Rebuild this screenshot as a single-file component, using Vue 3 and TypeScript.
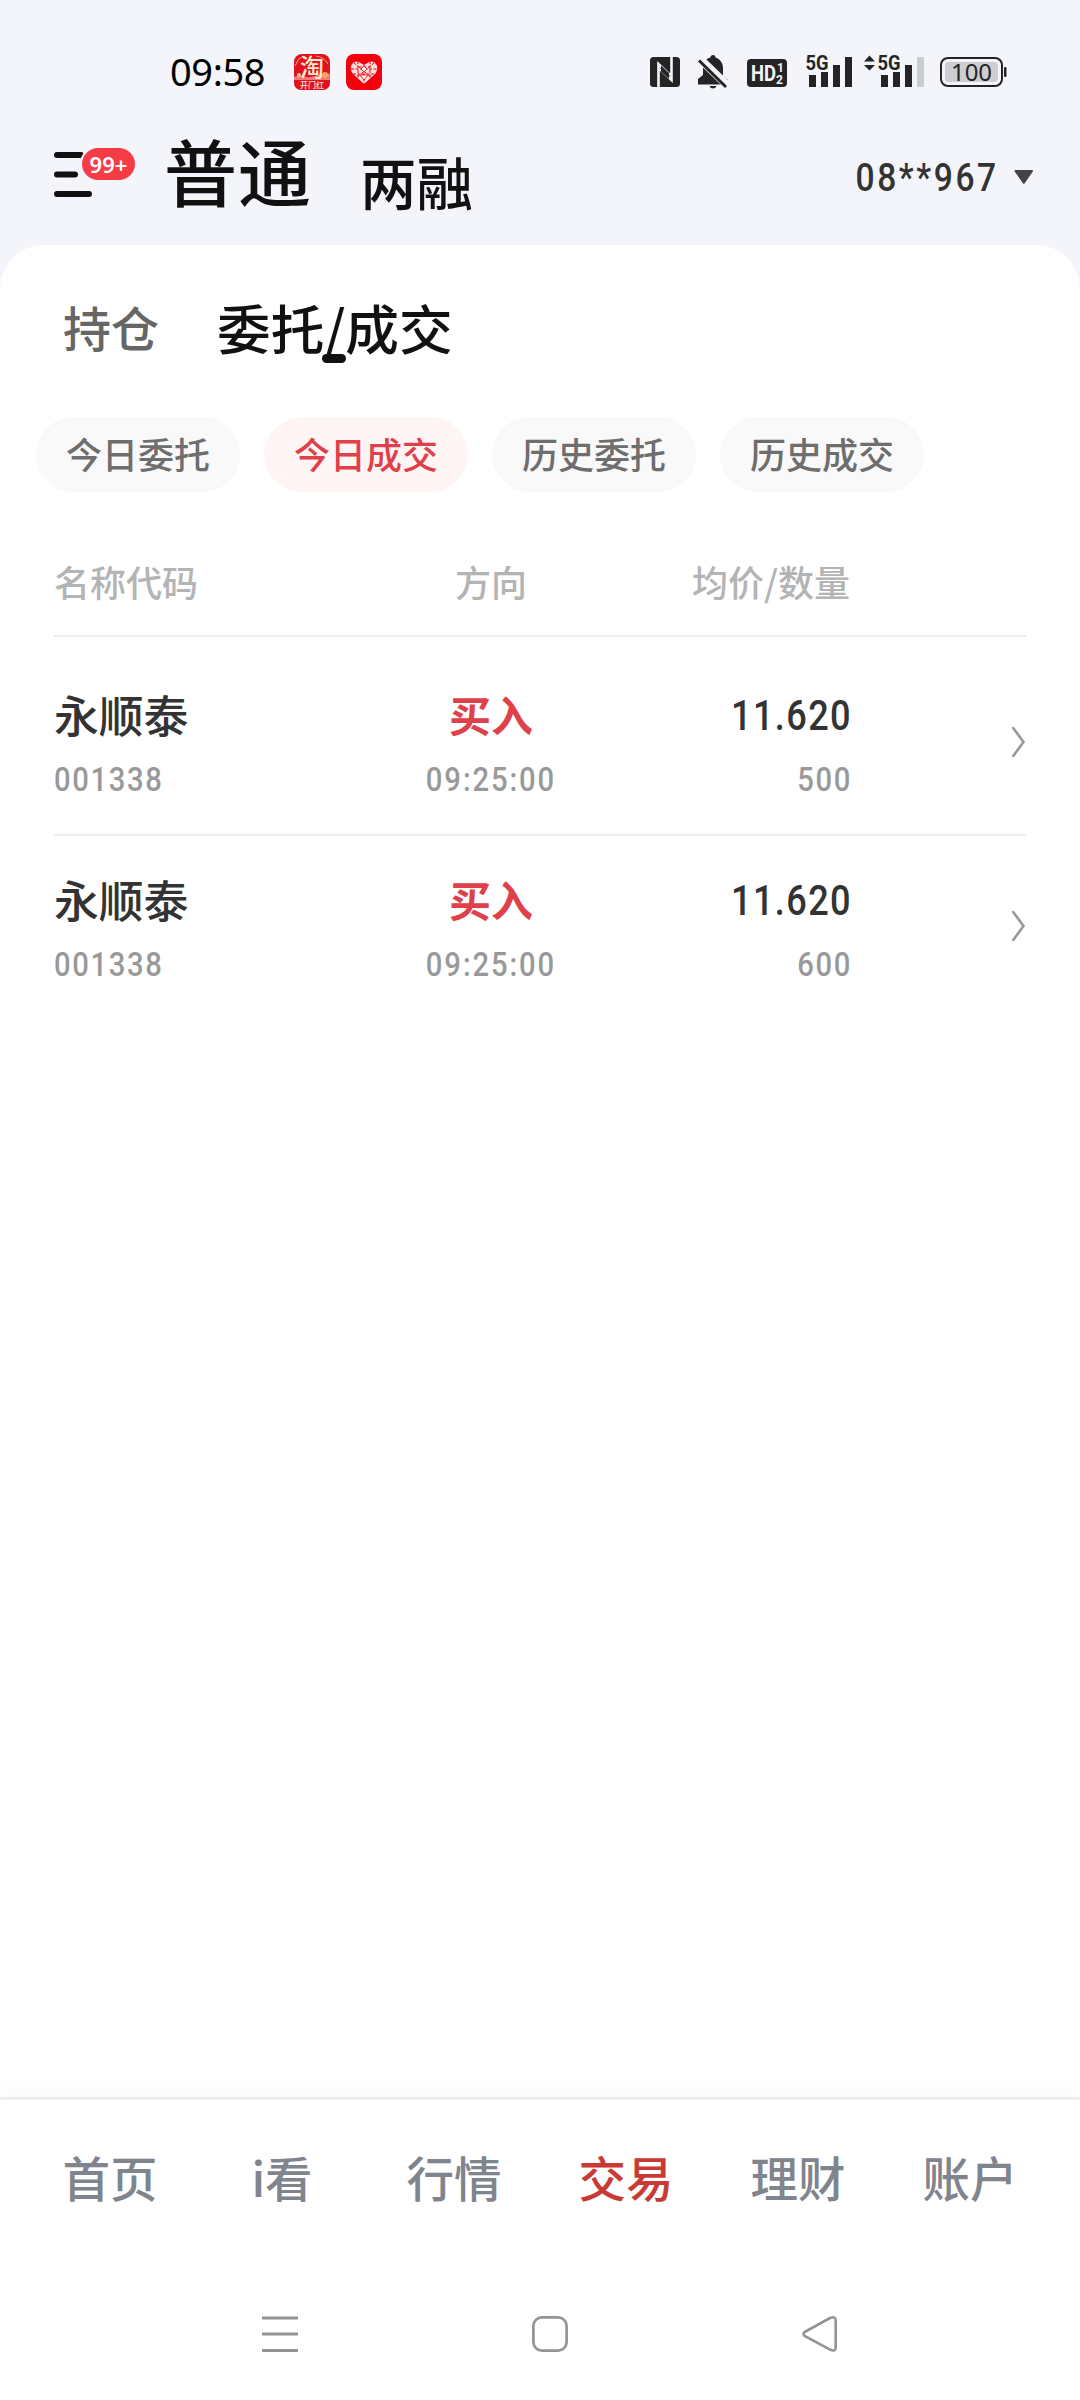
<script setup lang="ts">
interface Trade {
  name: string
  code: string
  side: string
  time: string
  price: string
  qty: string
}

const filters: string[] = ['今日委托', '今日成交', '历史委托', '历史成交']
const activeFilter = '今日成交'

const trades: Trade[] = [
  { name: '永顺泰', code: '001338', side: '买入', time: '09:25:00', price: '11.620', qty: '500' },
  { name: '永顺泰', code: '001338', side: '买入', time: '09:25:00', price: '11.620', qty: '600' },
]

const navItems: string[] = ['首页', 'i看', '行情', '交易', '理财', '账户']
const activeNav = '交易'
</script>

<template>
  <div class="screen">
    <header class="status">
      <span class="clock">09:58</span>
      <svg class="app-a" width="36" height="36" viewBox="0 0 36 36">
        <rect width="36" height="36" rx="8" fill="#e0121f" />
        <path d="M0 23C7 19 10 24 17 23S29 17 36 20V26H0Z" fill="#f07a78" />
        <path d="M22 2Q30 3 34 10M1 12Q3 5 9 2" stroke="#f5a08e" fill="none" />
        <circle cx="31" cy="21" r="3" fill="#f6a65c" />
        <circle cx="5" cy="21" r="2" fill="#f8c08f" />
        <text x="18" y="21.500" text-anchor="middle" font-size="24" font-weight="500" fill="#ffe9cf">淘</text>
        <path d="M0 26H36V28Q36 36 28 36H8Q0 36 0 28Z" fill="#e0121f" />
        <text x="18" y="34" text-anchor="middle" font-size="8" font-weight="500" fill="#ffe9cf">开门红</text>
      </svg>
      <svg class="app-b" width="36" height="36" viewBox="0 0 36 36">
        <rect width="36" height="36" rx="8" fill="#f3000c" />
        <path d="M18 30 7 20Q4 16 5 12 7 7 12 7.500L18 11 24 7.500Q29 7 31 12 32 16 29 20Z" fill="#fbdcdc" />
        <path d="M12 7V25M24 7V25M18 11V30M5 15H31M7 20H29M8 9 26 24M28 9 10 24M13 13H23" stroke="#f3000c" stroke-width="1" stroke-dasharray="3 1.500" />
        <path d="m18 12 3 3-3 3-3-3ZM14 21h8l-4 5Z" fill="#fff" stroke="#f3000c" stroke-width=".8" />
      </svg>
      <svg class="system" width="360" height="36" viewBox="648 54 360 36" fill="#242424">
        <rect x="650" y="57" width="30" height="30" rx="3.500" />
        <path d="M658.500 87V64L670 75M671.500 57V80L660 69" fill="none" stroke="#f4f5fa" stroke-width="2.600" />
        <path d="M661 65.500 669 73V79L661 71.500Z" fill="#242424" />
        <path d="M713 55a2.500 2.500 0 0 1 2.500 2.500C720 59 723 63 723 68v8l5 4v4.500H698V79l5-4v-8c0-5 3-8.500 7.500-9.500A2.500 2.500 0 0 1 713 55ZM709.500 86h7q-1 2.500-3.500 2.500t-3.500-2.500Z" />
        <path d="M699.500 58.500 728 86" stroke="#f4f5fa" stroke-width="8" />
        <path d="M699 60.500 726 87" stroke="#242424" stroke-width="3" />
        <rect x="747" y="59" width="40" height="28" rx="4" />
        <text x="751" y="81" font-size="22" font-weight="700" fill="#f4f5fa" textLength="25" lengthAdjust="spacingAndGlyphs">HD</text>
        <text x="777" y="72" font-size="12" font-weight="700" fill="#f4f5fa">1</text>
        <text x="776" y="84" font-size="12" font-weight="700" fill="#f4f5fa">2</text>
        <text x="805.500" y="70" font-size="21" font-weight="700" textLength="23" lengthAdjust="spacingAndGlyphs">5G</text>
        <path d="M809 75h7v12h-7zM821 72h7v15h-7zM833 65h7v22h-7zM845 57h7v30h-7z" />
        <path d="M864 61.500 869.500 55.500 875 61.500ZM864 65H875L869.500 70.500Z" />
        <text x="877.500" y="70" font-size="21" font-weight="700" textLength="23" lengthAdjust="spacingAndGlyphs">5G</text>
        <path d="M881 75h7v12h-7zM893 72h7v15h-7zM905 65h7v22h-7z" />
        <rect x="917" y="57" width="7" height="30" rx="1" fill="#cbccd0" />
        <rect x="941" y="58" width="61" height="28" rx="7" fill="none" stroke="#242424" stroke-width="2" />
        <rect x="945" y="62" width="53" height="20" rx="4" fill="#cdced2" />
        <rect x="1004" y="67" width="2.500" height="10" rx="1" />
        <text class="charge" x="971.500" y="81" text-anchor="middle" font-size="24">100</text>
      </svg>
    </header>

    <section class="top">
      <div class="menu">
        <svg width="40" height="48" viewBox="0 0 40 48" stroke="#111" stroke-width="6" stroke-linecap="round">
          <path d="M3 6H27M3 25.500H21M3 45H35" />
        </svg>
        <span class="badge">99+</span>
      </div>
      <span class="mode-main">普通</span>
      <span class="mode-sub">两融</span>
      <div class="account">
        <span class="num">08**967</span>
        <svg width="20" height="14" viewBox="0 0 20 14"><path d="M1.500 0h16.500q1.500 0 .8 1.500L10.700 13.200q-.9 1-1.800 0L.7 1.500Q0 0 1.500 0Z" fill="#444" /></svg>
      </div>
    </section>

    <main class="card">
      <div class="tabs">
        <span class="tab">持仓</span>
        <span class="tab current">委托/成交</span>
      </div>
      <div class="chips">
        <span v-for="f in filters" :key="f" class="chip" :class="{ on: f === activeFilter }">{{ f }}</span>
      </div>
      <div class="table">
        <div class="row head">
          <span>名称代码</span><span class="mid">方向</span><span class="end">均价/数量</span><span />
        </div>
        <div v-for="(t, i) in trades" :key="i" class="row item">
          <div class="cell">
            <span class="name">{{ t.name }}</span>
            <span class="minor">{{ t.code }}</span>
          </div>
          <div class="cell mid">
            <span class="side">{{ t.side }}</span>
            <span class="minor time">{{ t.time }}</span>
          </div>
          <div class="cell end">
            <span class="price">{{ t.price }}</span>
            <span class="minor">{{ t.qty }}</span>
          </div>
          <svg class="go" width="15" height="30" viewBox="0 0 15 30"><path d="M1.500 0 12.500 15 1.500 30" fill="none" stroke="#999" stroke-width="2.600" /></svg>
        </div>
      </div>
    </main>

    <nav class="nav">
      <span v-for="n in navItems" :key="n" :class="{ on: n === activeNav }">{{ n }}</span>
    </nav>
    <footer class="keys">
      <svg width="36" height="38" viewBox="0 0 36 38" stroke="#949494" stroke-width="3"><path d="M0 3H36M0 19H36M0 35.500H36" /></svg>
      <svg width="36" height="38" viewBox="0 0 36 38" fill="none" stroke="#949494" stroke-width="2.700"><rect x="1.400" y="2.400" width="33.200" height="33.200" rx="8.500" /></svg>
      <svg width="36" height="38" viewBox="0 0 36 38" fill="none" stroke="#949494" stroke-width="2.600"><path d="M2.600 17 28.500 2.800Q33.700 1 33.700 5.500V32.500Q33.700 37 28.500 34.800L2.600 21Q.5 19 2.600 17Z" /></svg>
    </footer>
  </div>
</template>

<style>
body {
  margin: 0;
  background: #fff;
}
</style>

<style scoped>
.screen {
  width: 1080px;
  height: 2400px;
  display: flex;
  flex-direction: column;
  background: #f4f5fa;
  font-family: "Noto Sans CJK SC", sans-serif;
  overflow: hidden;
}
.status {
  height: 90px;
  box-sizing: border-box;
  padding: 54px 72px 0 170px;
  display: flex;
  align-items: center;
}
.status svg {
  flex: none;
  overflow: visible;
}
.clock {
  width: 124px;
  font: 400 38px/34px "Noto Sans", sans-serif;
  letter-spacing: -0.4px;
  margin-top: -2px;
  color: #000;
}
.app-b {
  margin-left: 16px;
}
.system {
  margin-left: auto;
  font-family: "Roboto", sans-serif;
}
.charge {
  font-family: "Noto Sans", sans-serif;
}
.top {
  height: 155px;
  box-sizing: border-box;
  padding: 0 46px 0 54px;
  display: flex;
  align-items: flex-start;
  color: #111;
  white-space: nowrap;
}
.menu {
  position: relative;
  width: 110px;
  padding-top: 59px;
}
.menu svg {
  display: block;
}
.badge {
  position: absolute;
  left: 26px;
  top: 56px;
  width: 53px;
  height: 32px;
  border: 2px solid #f4f5fa;
  border-radius: 18px;
  background: #f63c46;
  color: #fff;
  font: 600 22px/33px "Noto Sans", sans-serif;
  text-align: center;
}
.mode-main {
  font-size: 73px;
  font-weight: 500;
  line-height: 80px;
  margin-top: 39px;
  letter-spacing: 1px;
}
.mode-sub {
  font-size: 56.5px;
  font-weight: 500;
  line-height: 60px;
  margin: 60px 0 0 48px;
}
.account {
  margin: 68px 0 0 auto;
  display: flex;
  align-items: center;
  gap: 14px;
  color: #333;
}
.num,
.minor,
.price {
  transform: scaleX(0.86);
}
.num {
  font: 500 39px/36px "Roboto", sans-serif;
  letter-spacing: 3px;
  transform-origin: right;
  padding: 2px 2px 0 0;
}
.card {
  flex: 1;
  border-radius: 44px 44px 0 0;
  background: #fff;
}
.tabs {
  height: 172px;
  box-sizing: border-box;
  padding: 49px 0 0 63px;
  display: flex;
  gap: 58px;
}
.tab {
  font-size: 48px;
  line-height: 64px;
  font-weight: 500;
  color: #666;
}
.current {
  position: relative;
  font-size: 53.7px;
  line-height: 66px;
  color: #111;
}
.current::after {
  content: "";
  position: absolute;
  left: 105px;
  top: 60px;
  width: 24px;
  height: 9px;
  border-radius: 5px;
  background: #111;
}
.chips {
  display: flex;
  gap: 24px;
  padding-left: 36px;
}
.chip {
  width: 204px;
  height: 75px;
  border-radius: 38px;
  background: #f9f9f9;
  color: #6e6e6e;
  font-size: 36px;
  font-weight: 500;
  line-height: 73px;
  text-align: center;
}
.chip.on {
  background: #fff5f5;
  color: #e0404a;
}
.table {
  padding: 0 54px;
}
.row {
  display: grid;
  grid-template-columns: 270px 334px 192px 1fr;
  align-items: center;
}
.mid {
  text-align: center;
}
.end {
  text-align: right;
}
.head {
  height: 145px;
  box-sizing: border-box;
  padding-top: 35px;
  border-bottom: 2px solid #eee;
  font-size: 36px;
  font-weight: 500;
  color: #b4b4b4;
}
.item {
  height: 180px;
}
.head + .item {
  height: 183px;
  padding-top: 13px;
  padding-bottom: 1px;
  border-bottom: 2px solid #eee;
}
.cell {
  display: flex;
  flex-direction: column;
  padding-top: 11px;
}
.name,
.side,
.price {
  height: 64px;
  line-height: 62px;
}
.name {
  font-size: 44.8px;
  font-weight: 500;
  color: #333;
}
.side {
  font-size: 42px;
  font-weight: 700;
  color: #e0404a;
}
.price {
  font-family: "Roboto", sans-serif;
  font-size: 42px;
  line-height: 65px;
  font-weight: 500;
  color: #333;
  letter-spacing: 1.6px;
}
.minor {
  font: 500 34px/64px "Roboto", sans-serif;
  letter-spacing: 1.9px;
  color: #999;
  transform-origin: left;
}
.minor.time {
  letter-spacing: 2.2px;
  margin: 0 -20px;
  transform-origin: center;
}
.end .minor,
.end .price {
  transform-origin: right;
  margin-right: -2px;
}
.go {
  justify-self: end;
}
.nav {
  height: 182px;
  box-sizing: border-box;
  border-top: 3px solid #eee;
  padding: 0 24px;
  display: grid;
  grid-template-columns: repeat(6, 1fr);
  background: #fff;
  box-shadow: 0 -4px 20px rgba(0, 0, 0, 0.03);
  font-size: 47.5px;
  font-weight: 500;
  line-height: 154px;
  text-align: center;
  color: #80848c;
}
.nav .on {
  color: #c93a34;
}
.keys {
  height: 121px;
  box-sizing: border-box;
  padding: 36px 242px 0 262px;
  display: flex;
  justify-content: space-between;
  background: #fff;
}
</style>
